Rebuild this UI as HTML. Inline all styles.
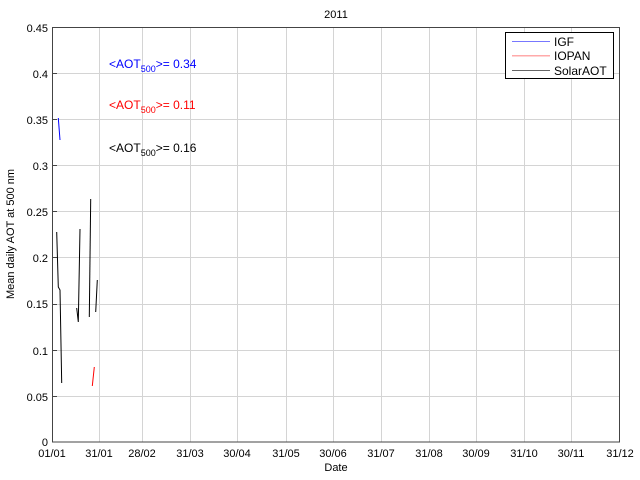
<!DOCTYPE html>
<html><head><style>
body{margin:0;background:#fff;width:640px;height:480px;overflow:hidden}
svg{display:block;font-family:"Liberation Sans",sans-serif}
</style></head><body>
<svg width="640" height="480" viewBox="0 0 640 480">
<rect width="640" height="480" fill="#fff"/>
<g stroke="#d4d4d4" stroke-width="1">
<line x1="99.5" y1="27" x2="99.5" y2="442"/><line x1="142.5" y1="27" x2="142.5" y2="442"/>
<line x1="190.5" y1="27" x2="190.5" y2="442"/><line x1="237.5" y1="27" x2="237.5" y2="442"/>
<line x1="286.5" y1="27" x2="286.5" y2="442"/><line x1="333.5" y1="27" x2="333.5" y2="442"/>
<line x1="381.5" y1="27" x2="381.5" y2="442"/><line x1="429.5" y1="27" x2="429.5" y2="442"/>
<line x1="476.5" y1="27" x2="476.5" y2="442"/><line x1="524.5" y1="27" x2="524.5" y2="442"/>
<line x1="571.5" y1="27" x2="571.5" y2="442"/>
<line x1="52" y1="73.5" x2="620" y2="73.5"/><line x1="52" y1="119.5" x2="620" y2="119.5"/>
<line x1="52" y1="165.5" x2="620" y2="165.5"/><line x1="52" y1="211.5" x2="620" y2="211.5"/>
<line x1="52" y1="257.5" x2="620" y2="257.5"/><line x1="52" y1="304.5" x2="620" y2="304.5"/>
<line x1="52" y1="350.5" x2="620" y2="350.5"/><line x1="52" y1="396.5" x2="620" y2="396.5"/>
</g>
<rect x="52.5" y="27.5" width="567" height="414.5" fill="none" stroke="#444" stroke-width="1"/>
<g stroke="#444">
<line x1="52" y1="73.5" x2="57" y2="73.5"/><line x1="52" y1="119.5" x2="57" y2="119.5"/>
<line x1="52" y1="165.5" x2="57" y2="165.5"/><line x1="52" y1="211.5" x2="57" y2="211.5"/>
<line x1="52" y1="257.5" x2="57" y2="257.5"/><line x1="52" y1="304.5" x2="57" y2="304.5"/>
<line x1="52" y1="350.5" x2="57" y2="350.5"/><line x1="52" y1="396.5" x2="57" y2="396.5"/>
</g>
<g fill="none" stroke-width="1">
<polyline stroke="#00f" points="58.3,118 60,140"/>
<polyline stroke="#000" points="56.7,232 58.3,287 60,290 61.7,383"/>
<polyline stroke="#000" points="76.7,308 78.3,322 80,229"/>
<polyline stroke="#000" points="89.3,317 90.7,199"/>
<polyline stroke="#000" points="95.7,312 97.3,280"/>
<polyline stroke="#f00" points="92.3,386 94.3,367"/>
</g>
<g font-size="11" fill="#000" text-anchor="end">
<text x="48" y="32">0.45</text><text x="48" y="78">0.4</text><text x="48" y="124">0.35</text>
<text x="48" y="170">0.3</text><text x="48" y="216">0.25</text><text x="48" y="262">0.2</text>
<text x="48" y="308">0.15</text><text x="48" y="355">0.1</text><text x="48" y="401">0.05</text>
<text x="48" y="446">0</text>
</g>
<g font-size="11" fill="#000" text-anchor="middle">
<text x="52" y="457">01/01</text><text x="99" y="457">31/01</text><text x="142" y="457">28/02</text>
<text x="190" y="457">31/03</text><text x="237" y="457">30/04</text><text x="286" y="457">31/05</text>
<text x="333" y="457">30/06</text><text x="381" y="457">31/07</text><text x="429" y="457">31/08</text>
<text x="476" y="457">30/09</text><text x="524" y="457">31/10</text><text x="571" y="457">30/11</text>
<text x="620" y="457">31/12</text>
<text x="336" y="471">Date</text>
<text x="336" y="18">2011</text>
<text transform="translate(14,234) rotate(-90)">Mean daily AOT at 500 nm</text>
</g>
<g font-size="12">
<text x="109" y="68" fill="#00f">&lt;AOT<tspan font-size="9" dy="4">500</tspan><tspan dy="-4">&gt;= 0.34</tspan></text>
<text x="109" y="109" fill="#f00">&lt;AOT<tspan font-size="9" dy="4">500</tspan><tspan dy="-4">&gt;= 0.11</tspan></text>
<text x="109" y="152" fill="#000">&lt;AOT<tspan font-size="9" dy="4">500</tspan><tspan dy="-4">&gt;= 0.16</tspan></text>
</g>
<rect x="505.5" y="32.5" width="108" height="46" fill="#fff" stroke="#000"/>
<rect x="512" y="41" width="38" height="1" fill="#7777ff"/>
<rect x="512" y="55" width="38" height="1.5" fill="#ffaaaa"/>
<rect x="512" y="70" width="38" height="1" fill="#666"/>
<g font-size="12" fill="#000">
<text x="554" y="46">IGF</text><text x="554" y="60">IOPAN</text><text x="554" y="75">SolarAOT</text>
</g>
</svg>
</body></html>
